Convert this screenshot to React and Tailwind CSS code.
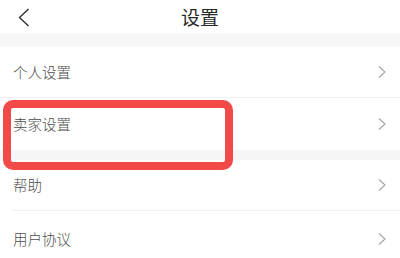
import React from "react";

const font = { fontFamily: '"Noto Sans CJK SC", "Noto Sans", sans-serif' };

function Chevron() {
  return (
    <svg width="10" height="14" viewBox="0 0 10 14" fill="none">
      <path d="M2 1.5 L8 7 L2 12.5" stroke="#a3a3a3" strokeWidth="1.1" />
    </svg>
  );
}

function Row({ label, h, divider }) {
  return (
    <div className={`${h} flex items-center justify-between px-[13px] ${divider ? "border-b border-[#efefef]" : ""}`}>
      <span className="text-[14.5px] text-[#4d4d4d] font-light">{label}</span>
      <Chevron />
    </div>
  );
}

export default function App() {
  return (
    <div className="relative w-[400px] h-[258px] overflow-hidden bg-white" style={font}>
      <div className="h-[33px] grid grid-cols-[1fr_auto_1fr] items-center">
        <div className="pl-[17px] pt-[1px]">
          <svg width="13" height="19" viewBox="0 0 13 19" fill="none">
            <path d="M11.5 1 L2.5 9.5 L11.5 18" stroke="#2a2a2a" strokeWidth="1.3" />
          </svg>
        </div>
        <div className="text-[19px] text-[#2a2a2a] leading-none">设置</div>
        <div />
      </div>
      <div className="h-[14px] bg-[#f7f7f7]" />
      <Row label="个人设置" h="h-[51px]" divider />
      <Row label="卖家设置" h="h-[52px]" />
      <div className="h-[10px] bg-[#f6f6f6]" />
      <div className="h-[51px] flex flex-col">
        <div className="flex-1 flex items-center justify-between px-[13px]">
          <span className="text-[14.5px] text-[#4d4d4d] font-light">帮助</span>
          <Chevron />
        </div>
        <div className="ml-[12px] h-px bg-[#efefef]" />
      </div>
      <Row label="用户协议" h="h-[55px]" />
      <div className="absolute left-[3px] top-[100px] w-[230px] h-[70px] border-[8px] border-[#f24a48] rounded-[10px]" />
    </div>
  );
}
